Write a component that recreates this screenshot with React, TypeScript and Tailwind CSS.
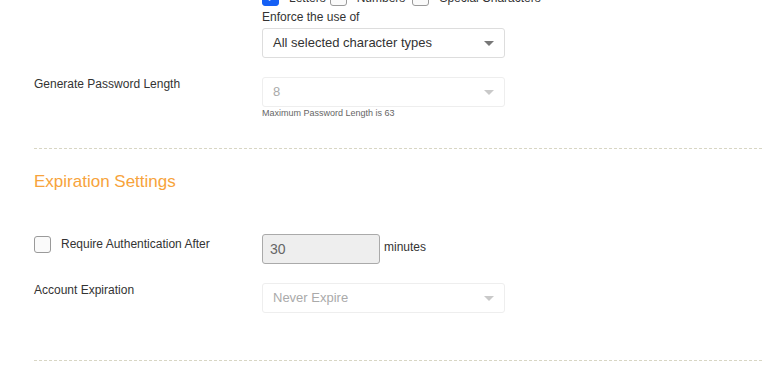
import { useState } from "react";

const font = { fontFamily: '"Liberation Sans", Arial, sans-serif' };

function Caret({ light }: { light?: boolean }) {
  return (
    <span
      className={`ml-auto h-0 w-0 border-x-[5px] border-t-[5px] border-x-transparent ${
        light ? "border-t-[#c9c9c9]" : "border-t-[#777]"
      }`}
    />
  );
}

function Check({ checked }: { checked?: boolean }) {
  return (
    <span
      className={`flex h-[17px] w-[17px] shrink-0 items-center justify-center rounded-[3px] border ${
        checked ? "border-[#1560f5] bg-[#1560f5]" : "border-[#9a9a9a] bg-[#fafafa]"
      }`}
    >
      {checked && (
        <svg viewBox="0 0 12 12" className="h-[11px] w-[11px]">
          <path d="M2.5 6.2 5 8.6 9.6 3.6" fill="none" stroke="#fff" strokeWidth="2" strokeLinecap="round" strokeLinejoin="round" />
        </svg>
      )}
    </span>
  );
}

export default function App() {
  const [requireAuth, setRequireAuth] = useState(false);

  return (
    <div className="min-h-screen bg-white text-[12px] text-[#333]" style={font}>
      <div className="-mt-[11px] pl-[34px]">
        {/* Password generation */}
        <div className="flex">
          <div className="-mt-[5px] w-[228px]">Generate Password Using</div>
          <div>
            <div className="flex h-[17px] items-center">
              <Check checked />
              <span className="ml-[10px]">Letters</span>
              <span className="ml-[4px]"><Check /></span>
              <span className="ml-[10px]">Numbers</span>
              <span className="ml-[7px]"><Check /></span>
              <span className="ml-[10px]">Special Characters</span>
            </div>
            <div className="mt-[4px] leading-[15px]">Enforce the use of</div>
            <div className="mt-[3px] flex h-[30px] w-[243px] items-center rounded-[3px] border border-[#ddd] px-[10px] text-[13px] text-[#333]">
              All selected character types
              <Caret />
            </div>
          </div>
        </div>

        <div className="mt-[19px] flex">
          <div className="-mt-[2px] w-[228px]">Generate Password Length</div>
          <div>
            <div className="flex h-[30px] w-[243px] items-center rounded-[3px] border border-[#eee] px-[10px] text-[13px] text-[#aaa]">
              8
              <Caret light />
            </div>
            <div className="text-[9px] leading-[12px] text-[#666]">Maximum Password Length is 63</div>
          </div>
        </div>

        <div className="mt-[29px] border-t border-dashed border-[#d8d6c4]" />

        {/* Expiration */}
        <h2 className="mt-[23px] text-[17px] leading-[20px] text-[#f7a33b]">Expiration Settings</h2>

        <div className="mt-[42px] flex">
          <label className="flex w-[228px] cursor-pointer items-start pt-[2px]" onClick={() => setRequireAuth(!requireAuth)}>
            <Check checked={requireAuth} />
            <span className="ml-[10px] -mt-[1px]">Require Authentication After</span>
          </label>
          <div className="flex items-center">
            <div className="flex h-[30px] w-[118px] items-center rounded-[3px] border border-[#aaa] bg-[#eee] px-[7px] text-[14px] text-[#666]">
              30
            </div>
            <span className="ml-[4px] -mt-[4px]">minutes</span>
          </div>
        </div>

        <div className="mt-[19px] flex">
          <div className="-mt-[2px] w-[228px]">Account Expiration</div>
          <div className="flex h-[30px] w-[243px] items-center rounded-[3px] border border-[#eee] px-[10px] text-[13px] text-[#aaa]">
            Never Expire
            <Caret light />
          </div>
        </div>

        <div className="mt-[47px] border-t border-dashed border-[#d8d6c4]" />
      </div>
    </div>
  );
}
